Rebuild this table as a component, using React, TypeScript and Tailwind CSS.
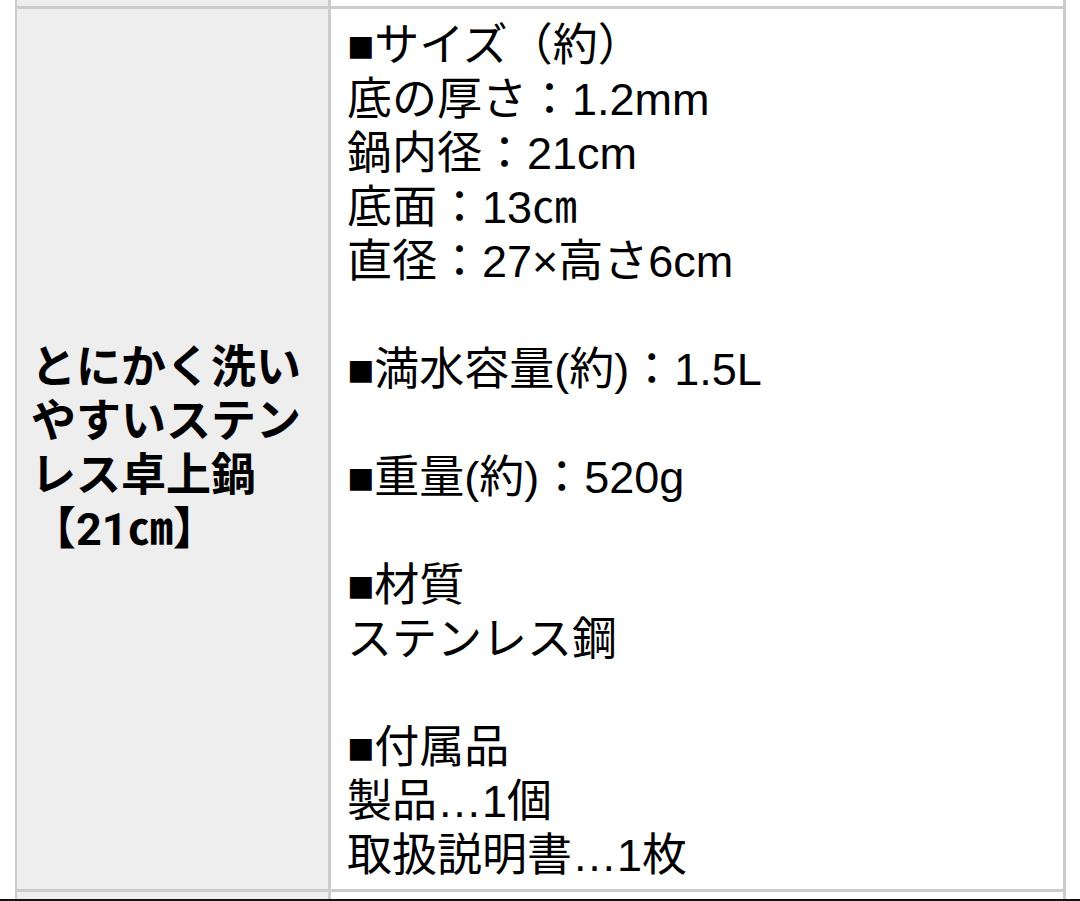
const specLines: string[] = [
    '■サイズ（約）',
    '底の厚さ：1.2mm',
    '鍋内径：21cm',
    '底面：13㎝',
    '直径：27×高さ6cm',
    '',
    '■満水容量(約)：1.5L',
    '',
    '■重量(約)：520g',
    '',
    '■材質',
    'ステンレス鋼',
    '',
    '■付属品',
    '製品…1個',
    '取扱説明書…1枚',
];

function Row({ height, children }: { height: string; children?: React.ReactNode }) {
    return <div className={`grid grid-cols-[314px_1fr] ${height}`}>{children}</div>;
}

export default function App() {
    return (
        <div
            className="w-[1080px] h-[901px] bg-white overflow-hidden flex flex-col text-black"
            style={{ fontFamily: 'Roboto, "Noto Sans CJK JP", sans-serif' }}
        >
            <div className="ml-[15px] w-[1051px] border-l-2 border-r-[3px] border-[#cccccc] flex flex-col">
                {/* previous row, cut off */}
                <Row height="h-[6px]">
                    <div className="bg-[#eeeeee] border-r-[3px] border-[#cccccc]" />
                    <div />
                </Row>
                <div className="h-[3px] bg-[#cccccc]" />

                <Row height="h-[880px]">
                    <div className="bg-[#eeeeee] border-r-[3px] border-[#cccccc] flex items-center pl-[14px] pr-4">
                        <p className="text-[45px] leading-[54px] font-bold">
                            とにかく洗い<br />
                            やすいステン<br />
                            レス卓上鍋<br />
                            【21㎝】
                        </p>
                    </div>
                    <div
                        className="pl-4 pt-[10px] text-[45px] leading-[54px]"
                        style={{ fontFamily: '"Liberation Sans", "Noto Sans CJK JP", sans-serif' }}
                    >
                        {specLines.map((line, i) => (
                            <div key={i} className="h-[54px] whitespace-nowrap">
                                {line}
                            </div>
                        ))}
                    </div>
                </Row>

                <div className="h-[3px] bg-[#cccccc]" />
                {/* next row, cut off */}
                <Row height="h-[7px]">
                    <div className="bg-[#eeeeee] border-r-[3px] border-[#cccccc]" />
                    <div />
                </Row>
            </div>
            <div className="h-[2px] bg-[#111111]" />
        </div>
    );
}
